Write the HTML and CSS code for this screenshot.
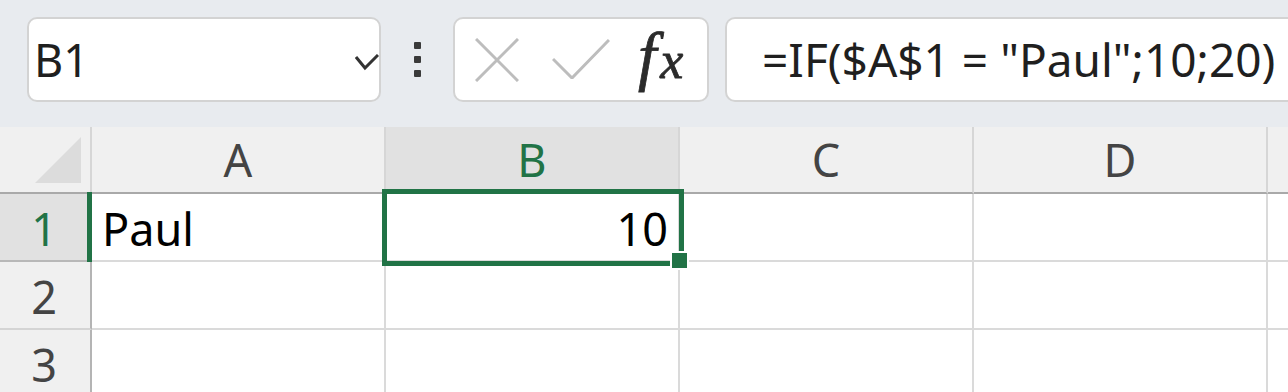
FILE: index.html
```html
<!DOCTYPE html>
<html>
<head>
    <meta charset="UTF-8">
    <title>Sheet</title>
    <link rel="stylesheet" href="styles.css">
</head>
<body>
<div class="toolbar">
    <div class="namebox">
        <span class="ref">B1</span>
        <svg class="chev" width="24" height="18" viewBox="0 0 24 18"><polyline points="1,3 10,14 23,1" fill="none" stroke="#333" stroke-width="3"/></svg>
    </div>
    <div class="more"><i></i><i></i><i></i></div>
    <div class="fbtns">
        <svg class="cancel" width="44" height="44" viewBox="0 0 44 44"><path d="M1 1 L43 43 M43 1 L1 43" stroke="#bdbdbd" stroke-width="3" fill="none"/></svg>
        <svg class="enter" width="58" height="40" viewBox="0 0 58 40"><polyline points="1,20 20,39 57,1" fill="none" stroke="#bdbdbd" stroke-width="3"/></svg>
        <span class="fx"><span class="f">f</span><span class="x">x</span></span>
    </div>
    <div class="formula">=IF($A$1 = "Paul";10;20)</div>
</div>

<div class="sheet">
    <div class="corner"><span class="tri"></span></div>
    <div class="colh">A</div>
    <div class="colh on">B</div>
    <div class="colh">C</div>
    <div class="colh">D</div>
    <div class="colh"></div>

    <div class="rowh on">1</div>
    <div class="cell">Paul</div>
    <div class="cell num">10</div>
    <div class="cell"></div>
    <div class="cell"></div>
    <div class="cell"></div>

    <div class="rowh">2</div>
    <div class="cell"></div>
    <div class="cell"></div>
    <div class="cell"></div>
    <div class="cell"></div>
    <div class="cell"></div>

    <div class="rowh">3</div>
    <div class="cell"></div>
    <div class="cell"></div>
    <div class="cell"></div>
    <div class="cell"></div>
    <div class="cell"></div>

    <!-- active cell frame + row marker -->
    <div class="mark"></div>
    <div class="sel"></div>
    <div class="handle"></div>
</div>
</body>
</html>
```

FILE: styles.css
```css
* {
    margin: 0;
    padding: 0;
    box-sizing: border-box;
}

body {
    width: 1288px;
    height: 392px;
    overflow: hidden;
    background: #fff;
    font-family: "Noto Sans", "Open Sans", sans-serif;
    font-size: 45px;
    color: #1f1f1f;
}

/* toolbar */
.toolbar {
    display: flex;
    align-items: flex-start;
    height: 127px;
    padding: 17px 0 0 27px;
    background: #e8ebef;
    overflow: hidden;
}

.toolbar > div {
    flex-shrink: 0;
}

.namebox, .fbtns, .formula {
    height: 85px;
    background: #fff;
    border: 2px solid #d3d3d3;
    border-radius: 10px;
}

.namebox {
    display: flex;
    align-items: center;
    justify-content: space-between;
    width: 354px;
    padding-left: 5px;
}

.namebox .ref {
    line-height: 81px;
}

.namebox .chev {
    margin-top: 6px;
}

.more {
    display: flex;
    flex-direction: column;
    gap: 7px;
    width: 72px;
    align-items: center;
    padding-top: 25px;
}

.more i {
    display: block;
    width: 7px;
    height: 7px;
    border-radius: 1px;
    background: #3a3a3a;
}

.fbtns {
    display: flex;
    align-items: center;
    width: 256px;
    padding-left: 20px;
}

.fbtns .enter {
    margin-left: 33px;
    margin-top: -2px;
}

.fx {
    margin-left: 28px;
    font-family: "Liberation Serif", serif;
    font-style: italic;
    color: #2b2b2b;
    line-height: 81px;
    -webkit-text-stroke: 0.8px #2b2b2b;
}

.fx .f {
    font-size: 66px;
}

.fx .x {
    font-size: 52px;
    margin-left: 4px;
}

.formula {
    width: 570px;
    margin-left: 16px;
    padding-left: 35px;
    font-size: 46px;
    line-height: 81px;
    border-right: none;
    border-radius: 10px 0 0 10px;
    white-space: nowrap;
}

/* grid */
.sheet {
    position: relative;
    display: grid;
    grid-template-columns: 92px repeat(4, 294px) 40px;
    grid-template-rows: 67px 68px 68px 68px;
}

.corner, .colh, .rowh, .cell {
    border-right: 2px solid #dadada;
    border-bottom: 2px solid #dadada;
    overflow: hidden;
    white-space: nowrap;
}

.corner {
    position: relative;
    background: #f0f0f0;
    border-right-color: #d6d6d6;
    border-bottom-color: #a9a9a9;
}

.corner .tri {
    position: absolute;
    left: 35px;
    top: 10px;
    width: 46px;
    height: 46px;
    background: #dcdcdc;
    clip-path: polygon(100% 0, 100% 100%, 0 100%);
}

.colh {
    background: #f0f0f0;
    border-right-color: #d6d6d6;
    border-bottom-color: #a9a9a9;
    text-align: center;
    line-height: 65px;
    color: #444;
}

.colh.on, .rowh.on {
    background: #e1e1e1;
    color: #217346;
}

.rowh {
    background: #f0f0f0;
    border-right-color: #b4b4b4;
    border-bottom-color: #d4d4d4;
    text-align: center;
    line-height: 66px;
    padding-top: 2px;
    padding-right: 2px;
    color: #444;
}

.rowh.on {
    border-bottom-color: #b8b8b8;
}

.cell {
    line-height: 66px;
    padding: 2px 10px 0 10px;
    color: #000;
}

.cell.num {
    text-align: right;
}

.mark {
    position: absolute;
    left: 87px;
    top: 65px;
    width: 5px;
    height: 70px;
    background: #217346;
}

.sel {
    position: absolute;
    left: 382px;
    top: 62px;
    width: 302px;
    height: 77px;
    border: 5px solid #217346;
}

.handle {
    position: absolute;
    left: 670px;
    top: 124px;
    width: 19px;
    height: 19px;
    background: #217346;
    border: 2px solid #fff;
}
```
